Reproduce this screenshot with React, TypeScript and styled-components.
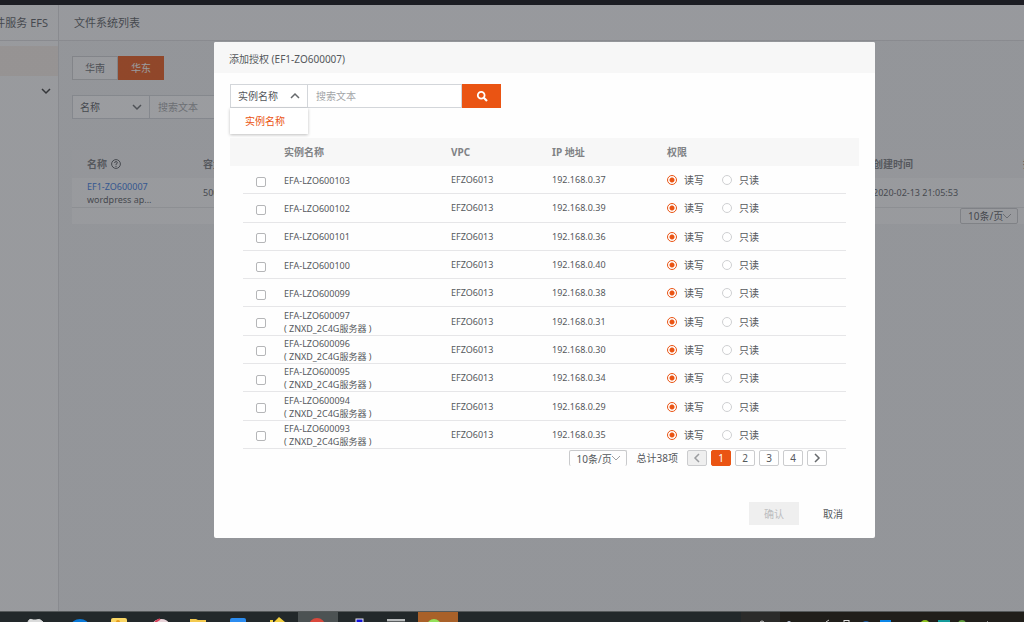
import React, { useState } from 'react';
import styled, { createGlobalStyle } from 'styled-components';

const GlobalStyle = createGlobalStyle`
  * { box-sizing: border-box; }
  body { margin: 0; overflow: hidden; }
  body, button, input, select {
    font-family: "Noto Sans", "Noto Sans CJK SC", sans-serif;
    font-size: 10px;
    line-height: 14px;
    color: #55585c;
  }
  button, input, select { margin: 0; padding: 0; border: 0; border-radius: 0; background: none; }
  input::placeholder { color: #a3a5a8; opacity: 1; }
`;

const ORANGE = '#ea5413';

const Screen = styled.div`
  height: 100vh;
  display: flex;
  flex-direction: column;
  overflow: hidden;
`;

const TopStrip = styled.div`
  flex: none;
  height: 5px;
  background: #1c1d23;
`;

const Workspace = styled.div`
  position: relative;
  flex: 1;
  min-height: 0;
  display: flex;
  background: #f1f2f3;
`;

const Sidebar = styled.nav`
  flex: none;
  width: 59px;
  background: #fbfbfb;
  border-right: 1px solid #dcdcde;
  overflow: hidden;
`;

const ProductName = styled.div`
  display: flex;
  justify-content: flex-end;
  align-items: center;
  height: 36px;
  padding-right: 10px;
  border-bottom: 1px solid #dcdcde;
  font-size: 11px;
  white-space: nowrap;
`;

const ActiveItem = styled.div`
  height: 30px;
  margin-top: 5px;
  background: #f6ede6;
`;

const GroupToggle = styled.button`
  display: flex;
  justify-content: flex-end;
  align-items: center;
  width: 100%;
  height: 30px;
  padding-right: 7px;
`;

const Content = styled.main`
  flex: 1;
  min-width: 0;
  overflow: hidden;
`;

const PageTitle = styled.h1`
  display: flex;
  align-items: center;
  height: 36px;
  margin: 0;
  padding-left: 15px;
  background: #f9f9fa;
  border-bottom: 1px solid #dcdcde;
  font-size: 11px;
  font-weight: 400;
`;

const ContentBody = styled.div`
  padding: 15px 0 0 13px;
`;

const Regions = styled.div`
  display: flex;
`;

const RegionButton = styled.button<{ $active?: boolean }>`
  width: 46px;
  height: 24px;
  border: 1px solid ${p => (p.$active ? ORANGE : '#cfd0d2')};
  background: ${p => (p.$active ? ORANGE : '#fbfbfb')};
  color: ${p => (p.$active ? '#fff' : '#66696d')};
`;

const SearchRow = styled.div`
  display: flex;
  height: 24px;
`;

const PageSearch = styled(SearchRow)`
  margin-top: 15px;
`;

const SelectWrap = styled.div`
  position: relative;
  width: 78px;
  height: 24px;
  display: flex;
  align-items: center;
`;

const FieldSelect = styled.select`
  appearance: none;
  width: 100%;
  height: 24px;
  padding: 0 7px;
  border: 1px solid #d3d6da;
  background: #fff;
`;

const Indicator = styled.span`
  position: absolute;
  right: 8px;
  display: flex;
  pointer-events: none;
`;

const TextField = styled.input`
  width: 154px;
  height: 24px;
  padding: 0 8px;
  border: 1px solid #d3d6da;
  border-left: 0;
  background: #fff;
`;

const FileTable = styled.table`
  width: 100%;
  margin-top: 31px;
  border-collapse: collapse;
  table-layout: fixed;
  background: #fbfbfb;
  th {
    height: 28px;
    padding: 0;
    background: #f3f3f4;
    color: #76787b;
    text-align: left;
    white-space: nowrap;
  }
  td {
    height: 29px;
    padding: 2px 0 0;
    border-bottom: 1px solid #e4e4e6;
    font-size: 9px;
    white-space: nowrap;
  }
  th:first-child, td:first-child { padding-left: 15px; }
`;

const HeadWithIcon = styled.span`
  display: flex;
  align-items: center;
  gap: 4px;
`;

const FileLink = styled.a`
  display: block;
  font-size: 9px;
  line-height: 13px;
  color: #2f74e0;
  text-decoration: none;
`;

const FileNote = styled.span`
  display: block;
  line-height: 13px;
`;

const TableFoot = styled.div`
  display: flex;
  justify-content: flex-end;
  height: 16px;
  padding-right: 6px;
  background: #fbfbfb;
`;

const PageSize = styled.div`
  position: relative;
  width: 58px;
  height: 16px;
  display: flex;
  align-items: center;
`;

const PageSizeSelect = styled.select<{ $open?: boolean }>`
  appearance: none;
  width: 58px;
  height: 16px;
  padding-left: 7px;
  border: 1px solid #c9cacc;
  border-bottom-width: ${p => (p.$open ? 0 : 1)}px;
  border-radius: 2px;
  background: transparent;
`;

const SizeIndicator = styled(Indicator)`
  right: 6px;
`;

const Taskbar = styled.footer`
  flex: none;
  display: flex;
  height: 11px;
  padding-left: 18px;
  background: #22282a;
  border-top: 1px solid #55595a;
  overflow: hidden;
`;

const Task = styled.div<{ $bg?: string }>`
  flex: none;
  width: 40px;
  height: 10px;
  background: ${p => p.$bg ?? 'transparent'};
  svg { display: block; }
`;

const Tray = styled.div`
  width: 283px;
  height: 10px;
  margin-left: auto;
  background: #201e1a;
  svg { display: block; }
`;

const Overlay = styled.div`
  position: absolute;
  inset: -5px 0 0;
  padding: 42px 149px 0 214px;
  background: linear-gradient(transparent 5px, rgba(55, 58, 65, 0.5) 5px);
`;

const Dialog = styled.section`
  background: #fefefe;
  border-radius: 2px;
  overflow: hidden;
`;

const DialogTitle = styled.h2`
  display: flex;
  align-items: center;
  height: 31px;
  margin: 0;
  padding: 2px 0 0 15px;
  background: #f7f7f7;
  font-size: 10px;
  font-weight: 400;
`;

const DialogBody = styled.div`
  padding: 11px 16px 0;
`;

const OptionList = styled.ul`
  position: absolute;
  top: 24px;
  left: 0;
  width: 100%;
  margin: 0;
  padding: 6px 15px;
  list-style: none;
  background: #fff;
  box-shadow: 0 1px 3px rgba(0, 0, 0, 0.25);
  color: ${ORANGE};
`;

const SearchButton = styled.button`
  display: flex;
  align-items: center;
  justify-content: center;
  width: 39px;
  height: 24px;
  background: ${ORANGE};
`;

const TableArea = styled.div`
  margin-top: 30px;
  padding: 0 13px;
  background: linear-gradient(#f7f7f7 28px, transparent 28px);
`;

const HostTable = styled.table`
  width: 100%;
  height: 311px;
  border-collapse: separate;
  border-spacing: 0;
  table-layout: fixed;
  th {
    height: 28px;
    padding: 0;
    text-align: left;
    color: #808285;
  }
  td {
    height: 28px;
    padding: 1px 0 0;
    border-bottom: 1px solid #e6e6e8;
    font-size: 9px;
    line-height: 14px;
    white-space: nowrap;
  }
`;

const Col = styled.col<{ $width?: number }>`
  width: ${p => (p.$width ? `${p.$width}px` : 'auto')};
`;

const NameLine = styled.span`
  display: block;
  line-height: 13px;
`;

const Check = styled.input`
  appearance: none;
  display: block;
  width: 10px;
  height: 10px;
  margin: 3px 0 0 13px;
  border: 1px solid #b5b6b8;
  border-radius: 2px;
  background: #fff;
  &:checked { background: ${ORANGE}; }
`;

const Choices = styled.div`
  display: flex;
  gap: 18px;
`;

const Choice = styled.label`
  display: flex;
  align-items: center;
  gap: 7px;
  font-size: 10px;
`;

const Radio = styled.input`
  appearance: none;
  width: 10px;
  height: 10px;
  border: 1px solid #cfd0d2;
  border-radius: 50%;
  background: #fff;
  &:checked {
    border-color: ${ORANGE};
    background: radial-gradient(circle, ${ORANGE} 2px, #fff 3px);
  }
`;

const Pager = styled.div`
  display: flex;
  align-items: center;
  justify-content: flex-end;
  height: 18px;
  padding-right: 32px;
`;

const Total = styled.span`
  margin: 0 9px 0 10px;
`;

const PageList = styled.div`
  display: flex;
  gap: 4px;
`;

const PageButton = styled.button<{ $active?: boolean }>`
  display: flex;
  align-items: center;
  justify-content: center;
  width: 20px;
  height: 16px;
  border: 1px solid ${p => (p.$active ? ORANGE : '#cbccce')};
  border-radius: 2px;
  background: ${p => (p.$active ? ORANGE : '#fff')};
  color: ${p => (p.$active ? '#fff' : '#55585c')};
  &:disabled { background: #efefef; }
`;

const DialogFooter = styled.div`
  display: flex;
  justify-content: flex-end;
  gap: 24px;
  padding: 35px 32px 13px;
`;

const ConfirmButton = styled.button`
  width: 50px;
  height: 23px;
  background: #efefef;
  color: #bcbdbf;
`;

const CancelButton = styled.button`
  height: 23px;
`;

type Direction = 'up' | 'down' | 'left' | 'right';

const chevrons: Record<Direction, string> = {
  up: 'M1 7 L5 3 L9 7',
  down: 'M1 3 L5 7 L9 3',
  left: 'M7 1 L3 5 L7 9',
  right: 'M3 1 L7 5 L3 9',
};

function Chevron({ dir, color = '#66696c', stroke = 1.5 }: { dir: Direction; color?: string; stroke?: number }) {
  return (
    <svg width="10" height="10" viewBox="0 0 10 10" fill="none" stroke={color} strokeWidth={stroke}>
      <path d={chevrons[dir]} />
    </svg>
  );
}

function SizePicker({ open }: { open?: boolean }) {
  return (
    <PageSize>
      <PageSizeSelect $open={open} aria-label="每页条数">
        <option>10条/页</option>
      </PageSizeSelect>
      <SizeIndicator><Chevron dir="down" color="#a0a2a5" stroke={1} /></SizeIndicator>
    </PageSize>
  );
}

const hosts = [
  ['EFA-LZO600103', '192.168.0.37'],
  ['EFA-LZO600102', '192.168.0.39'],
  ['EFA-LZO600101', '192.168.0.36'],
  ['EFA-LZO600100', '192.168.0.40'],
  ['EFA-LZO600099', '192.168.0.38'],
  ['EFA-LZO600097', '192.168.0.31', '( ZNXD_2C4G服务器 )'],
  ['EFA-LZO600096', '192.168.0.30', '( ZNXD_2C4G服务器 )'],
  ['EFA-LZO600095', '192.168.0.34', '( ZNXD_2C4G服务器 )'],
  ['EFA-LZO600094', '192.168.0.29', '( ZNXD_2C4G服务器 )'],
  ['EFA-LZO600093', '192.168.0.35', '( ZNXD_2C4G服务器 )'],
];

function HostRow({ host }: { host: string[] }) {
  const [name, ip, note] = host;
  return (
    <tr>
      <td><Check type="checkbox" aria-label={name} /></td>
      <td>
        <NameLine>{name}</NameLine>
        {note && <NameLine>{note}</NameLine>}
      </td>
      <td>EFZO6013</td>
      <td>{ip}</td>
      <td>
        <Choices>
          <Choice><Radio type="radio" name={name} defaultChecked />读写</Choice>
          <Choice><Radio type="radio" name={name} />只读</Choice>
        </Choices>
      </td>
    </tr>
  );
}

function AuthDialog() {
  const [page, setPage] = useState(1);
  return (
    <Dialog role="dialog" aria-labelledby="auth-title">
      <DialogTitle id="auth-title">添加授权 (EF1-ZO600007)</DialogTitle>
      <DialogBody>
        <SearchRow>
          <SelectWrap>
            <FieldSelect aria-label="搜索字段"><option>实例名称</option></FieldSelect>
            <Indicator><Chevron dir="up" /></Indicator>
            <OptionList role="listbox"><li role="option" aria-selected="true">实例名称</li></OptionList>
          </SelectWrap>
          <TextField type="text" placeholder="搜索文本" aria-label="搜索文本" />
          <SearchButton aria-label="搜索">
            <svg width="12" height="12" viewBox="0 0 12 12" fill="none" stroke="#fff">
              <circle cx="5.2" cy="5.2" r="3.4" strokeWidth="1.8" />
              <path d="M7.8 7.8 L11 11" strokeWidth="2.2" />
            </svg>
          </SearchButton>
        </SearchRow>
        <TableArea>
          <HostTable>
            <colgroup>
              <Col $width={41} /><Col $width={167} /><Col $width={101} /><Col $width={115} /><Col />
            </colgroup>
            <thead>
              <tr><th /><th>实例名称</th><th>VPC</th><th>IP 地址</th><th>权限</th></tr>
            </thead>
            <tbody>{hosts.map(h => <HostRow key={h[0]} host={h} />)}</tbody>
          </HostTable>
        </TableArea>
        <Pager>
          <SizePicker open />
          <Total>总计38项</Total>
          <PageList>
            <PageButton disabled aria-label="上一页"><Chevron dir="left" color="#9a9c9f" /></PageButton>
            {[1, 2, 3, 4].map(n => (
              <PageButton key={n} $active={n === page} onClick={() => setPage(n)}>{n}</PageButton>
            ))}
            <PageButton aria-label="下一页"><Chevron dir="right" /></PageButton>
          </PageList>
        </Pager>
      </DialogBody>
      <DialogFooter>
        <ConfirmButton disabled>确认</ConfirmButton>
        <CancelButton>取消</CancelButton>
      </DialogFooter>
    </Dialog>
  );
}

const tasks: { bg?: string; art: React.ReactNode }[] = [
  { art: <path d="M10 10 Q11 6 15 8 L18 8 Q22 6 25 10" fill="#d9dada" stroke="#d9dada" /> },
  { art: <ellipse cx="22" cy="14" rx="9" ry="7" fill="#0a78d6" /> },
  { art: <><rect x="13" y="6" width="16" height="8" rx="2" fill="#fbd765" /><circle cx="20" cy="10" r="2" fill="#e79a1c" /></> },
  { art: <><ellipse cx="23" cy="12" rx="8" ry="5" fill="#e9d5da" /><path d="M17 10 L22 7" stroke="#d8405a" strokeWidth="2" /></> },
  { art: <path d="M12 7 H18 L20 8 H28 V12 H12 Z" fill="#f3c94e" /> },
  { art: <rect x="12" y="6" width="16" height="8" rx="2" fill="#2b8cf0" /> },
  { art: <path d="M16 10 L21 5 L27 10 Z M12 8 H15 V10 H12 Z" fill="#f2cf3f" /> },
  { bg: '#4c5253', art: <circle cx="19" cy="14" r="8" fill="#d9483c" /> },
  { art: <rect x="18" y="7" width="7" height="7" fill="#1414d8" stroke="#e8e8e8" /> },
  { art: <><rect x="9" y="7" width="18" height="2" fill="#b9bcbd" /><rect x="9" y="9" width="18" height="2" fill="#5d6162" /></> },
  { bg: '#a96129', art: <circle cx="16" cy="14" r="7" fill="#93e05a" /> },
];

export default function App() {
  return (
    <>
      <GlobalStyle />
      <Screen>
        <TopStrip />
        <Workspace>
          <Sidebar>
            <ProductName>件服务 EFS</ProductName>
            <ActiveItem />
            <GroupToggle aria-label="展开"><Chevron dir="down" color="#333" /></GroupToggle>
          </Sidebar>
          <Content>
            <PageTitle>文件系统列表</PageTitle>
            <ContentBody>
              <Regions>
                <RegionButton>华南</RegionButton>
                <RegionButton $active>华东</RegionButton>
              </Regions>
              <PageSearch>
                <SelectWrap>
                  <FieldSelect aria-label="字段"><option>名称</option></FieldSelect>
                  <Indicator><Chevron dir="down" /></Indicator>
                </SelectWrap>
                <TextField type="text" placeholder="搜索文本" aria-label="搜索" />
              </PageSearch>
              <FileTable>
                <colgroup><Col $width={131} /><Col /><Col $width={150} /><Col $width={1} /></colgroup>
                <thead>
                  <tr>
                    <th>
                      <HeadWithIcon>
                        名称
                        <svg width="10" height="10" viewBox="0 0 10 10" fill="none" stroke="#55585c">
                          <circle cx="5" cy="5" r="4.4" />
                          <path d="M3.6 4 Q3.6 2.6 5 2.6 Q6.4 2.6 6.4 3.8 Q6.4 4.6 5 5.2 V6.2 M5 7 V8" />
                        </svg>
                      </HeadWithIcon>
                    </th>
                    <th>容量</th>
                    <th>创建时间</th>
                    <th>操作</th>
                  </tr>
                </thead>
                <tbody>
                  <tr>
                    <td><FileLink href="#">EF1-ZO600007</FileLink><FileNote>wordpress ap...</FileNote></td>
                    <td>500</td>
                    <td>2020-02-13 21:05:53</td>
                    <td />
                  </tr>
                </tbody>
              </FileTable>
              <TableFoot><SizePicker /></TableFoot>
            </ContentBody>
          </Content>
          <Overlay><AuthDialog /></Overlay>
        </Workspace>
        <Taskbar>
          {tasks.map((t, i) => (
            <Task key={i} $bg={t.bg}><svg width="40" height="10" viewBox="0 0 40 10" fill="none">{t.art}</svg></Task>
          ))}
          <Tray>
            <svg width="283" height="10" viewBox="0 0 283 10" fill="none">
              <rect width="39" height="10" fill="#2b2b2a" />
              <circle cx="21" cy="11" r="2" stroke="#c9c9c9" />
              <circle cx="48" cy="11" r="2" fill="#b6c2d6" />
              <path d="M85 10 L88 8" stroke="#ccc" />
              <rect x="103" y="8.500" width="5" height="6" stroke="#ddd" />
              <circle cx="125" cy="13" r="4" fill="#235fa5" />
              <rect x="139" y="8" width="11" height="6" fill="#0a86e8" />
              <circle cx="184" cy="13" r="5" fill="#8dc21f" />
              <rect x="197" y="8" width="12" height="6" fill="#149a9a" />
              <circle cx="221" cy="12" r="4" fill="#5e9c3c" />
              <rect x="246" y="9" width="1" height="1" fill="#888" />
            </svg>
          </Tray>
        </Taskbar>
      </Screen>
    </>
  );
}
